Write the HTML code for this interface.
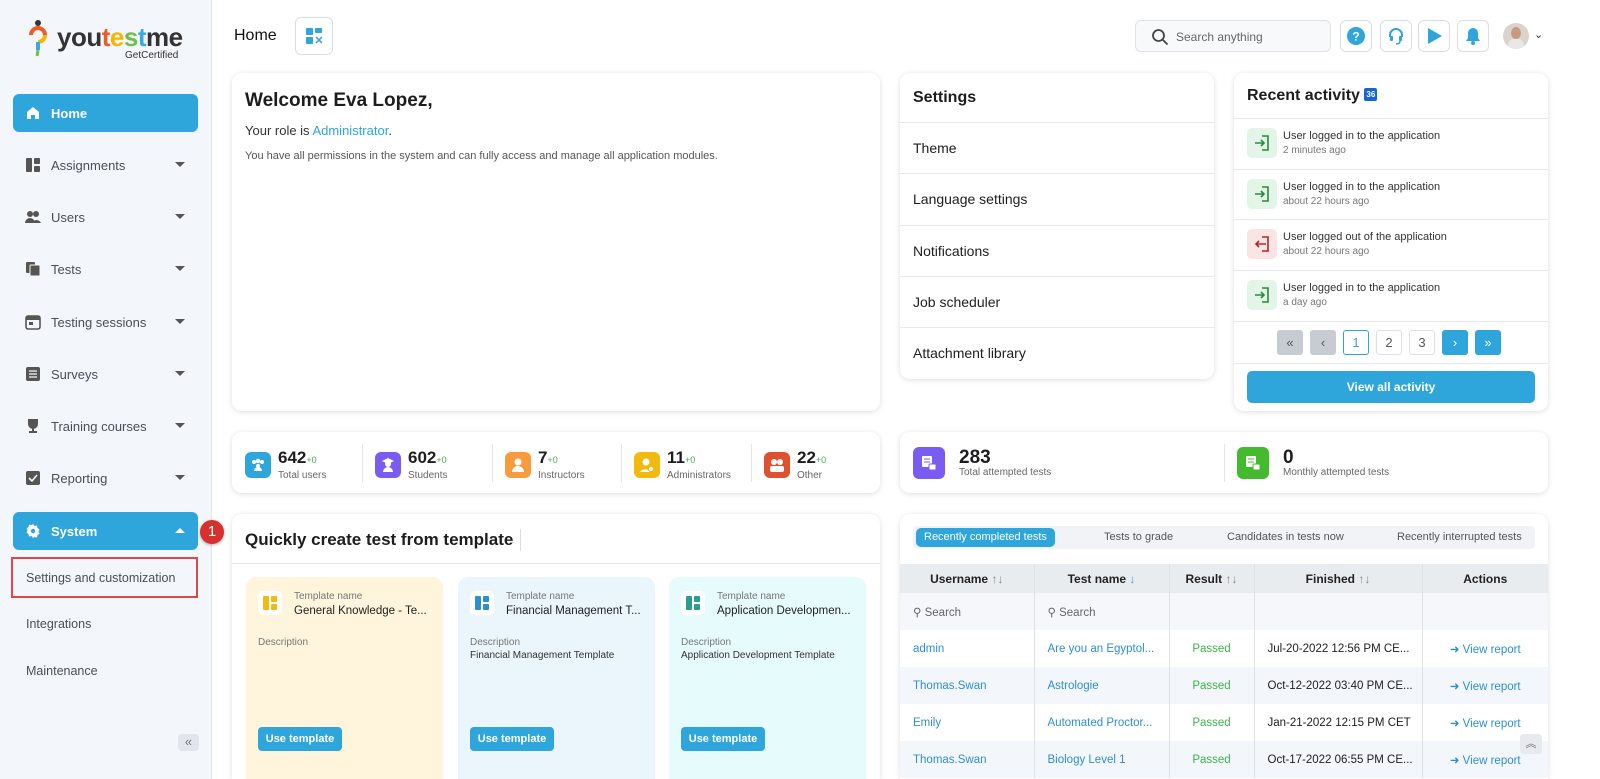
<!DOCTYPE html>
<html style="width:1600px;height:779px;overflow:hidden"><head><meta charset="utf-8">
<style>
*{box-sizing:border-box;margin:0;padding:0}
body{width:1600px;height:779px;overflow:hidden;font-family:"Liberation Sans",Arial,sans-serif;background:#fff;position:relative;color:#1d1d1f}
.a{position:absolute}
#side{left:0;top:0;width:212px;height:779px;background:#f3f6fb;border-right:1px solid #e3e7ee}
.nav{position:absolute;left:13px;width:185px;height:38px;border-radius:6px;font-size:13px;color:#4a4f57;display:flex;align-items:center;padding-left:12px}
.nav svg{margin-right:10px}
.nav .car{position:absolute;right:13px;top:16px;width:0;height:0;border-left:5px solid transparent;border-right:5px solid transparent;border-top:5px solid #555}
.act{background:#2ea6dc;color:#fff;font-weight:bold}
.sub{position:absolute;left:26px;font-size:12.5px;color:#4a4f57}
.card{position:absolute;background:#fff;border-radius:10px;box-shadow:0 1px 6px rgba(0,0,0,.13)}
.ib{position:absolute;top:20px;width:32px;height:32px;border:1px solid #d9dee5;border-radius:6px;background:#fff;display:flex;align-items:center;justify-content:center}
.srow{position:absolute;left:0;right:0;height:51px;border-top:1px solid #e6e9ee;font-size:14px;color:#1d1d1f;padding-left:13px;display:flex;align-items:center}
.act-it{position:absolute;left:0;right:0;height:50px;border-top:1px solid #e6e9ee}
.act-it .ic{position:absolute;left:13px;top:9px;width:30px;height:30px;border-radius:5px;display:flex;align-items:center;justify-content:center}
.act-it .t{position:absolute;left:49px;top:11px;font-size:11px;color:#333}
.act-it .s{position:absolute;left:49px;top:26px;font-size:10px;color:#777}
.pg{position:absolute;top:330px;width:26px;height:25px;border-radius:3px;font-size:13px;display:flex;align-items:center;justify-content:center}
.st{position:absolute;top:17px;display:flex;align-items:center}
.st .b{width:26px;height:26px;border-radius:6px;margin-right:7px;display:flex;align-items:center;justify-content:center}
.st .n{font-size:17px;font-weight:bold;line-height:17px}
.st .n small{font-size:9px;color:#3cb34a;font-weight:normal}
.st .l{font-size:10px;color:#666;margin-top:1px}
.sep{position:absolute;top:12px;width:1px;height:38px;background:#e3e6ea}
.tpl{position:absolute;top:63px;width:197px;height:240px;border-radius:10px}
.tpl .ico{position:absolute;left:12px;top:14px;width:24px;height:24px;background:#fff;border-radius:5px;display:flex;align-items:center;justify-content:center}
.tpl .tn{position:absolute;left:48px;top:14px;font-size:10px;color:#777}
.tpl .nm{position:absolute;left:48px;top:28px;font-size:11.5px;color:#222;white-space:nowrap;width:140px;overflow:hidden;text-overflow:ellipsis}
.tpl .dl{position:absolute;left:12px;top:60px;font-size:10px;color:#777}
.tpl .dd{position:absolute;left:12px;top:73px;font-size:10px;color:#333;white-space:nowrap}
.tpl .bt{position:absolute;left:12px;top:150px;width:84px;height:24px;border-radius:4px;background:#2ea6dc;color:#fff;font-size:11px;font-weight:bold;display:flex;align-items:center;justify-content:center;white-space:nowrap}
table{position:absolute;left:0;top:50px;width:648px;border-collapse:collapse;font-size:11.5px}
td,th{border-right:1px solid #dde1e6;padding:0 0 0 13px;text-align:left;white-space:nowrap}
th{background:#e9ecef;height:29px;font-size:12px;text-align:center;padding:0;color:#222}
td.c{text-align:center;padding:0}
.lk{color:#2e8fcf}
.pass{color:#3cb34a}
tr.r td{height:37px}
tr.alt td{background:#f3f7fb}
</style></head><body>
<div id="side" class="a">
 <svg class="a" style="left:28px;top:19px" width="22" height="40" viewBox="0 0 22 40"><circle cx="10" cy="4" r="3" fill="#333"/><path d="M3 16a7 7 0 0 1 14 0" stroke="#f05a28" stroke-width="4" fill="none"/><path d="M17 16a7 7 0 0 1-7 7" stroke="#f7b500" stroke-width="4" fill="none"/><path d="M10 23v8" stroke="#3aa9e0" stroke-width="4"/><path d="M10 31l-1 6" stroke="#6cc04a" stroke-width="3"/></svg>
 <div class="a" style="left:57px;top:22px;font-size:26px;font-weight:bold;letter-spacing:-0.5px;color:#333;line-height:30px">you<span style="color:#f05a28">t</span><span style="color:#f7b500">e</span><span style="color:#6cc04a">s</span><span style="color:#3aa9e0">t</span>me</div>
 <div class="a" style="left:125px;top:50px;font-size:10px;color:#333">GetCertified</div>
 <div class="nav act" style="top:94px"><svg width="16" height="16" viewBox="0 0 16 16"><path d="M2 7l6-5 6 5v7H10v-4H6v4H2z" fill="#fff"/></svg>Home</div>
 <div class="nav" style="top:146px"><svg width="16" height="16"><rect x="1" y="1" width="6" height="14" rx="1" fill="#555"/><rect x="9" y="1" width="6" height="6" rx="1" fill="#555"/><rect x="9" y="9" width="6" height="6" rx="1" fill="#555"/></svg>Assignments<span class="car"></span></div>
 <div class="nav" style="top:198px"><svg width="16" height="16"><circle cx="5" cy="5" r="3" fill="#555"/><circle cx="11" cy="5" r="3" fill="#555"/><path d="M0 14a5 5 0 0 1 10 0zM7 14a5 5 0 0 1 9 0z" fill="#555"/></svg>Users<span class="car"></span></div>
 <div class="nav" style="top:250px"><svg width="16" height="16"><rect x="1" y="1" width="9" height="11" rx="1" fill="#555"/><rect x="5" y="4" width="10" height="11" rx="1" fill="#555" stroke="#f3f6fb"/></svg>Tests<span class="car"></span></div>
 <div class="nav" style="top:303px"><svg width="16" height="16"><rect x="1" y="2" width="14" height="13" rx="2" fill="none" stroke="#555" stroke-width="1.6"/><rect x="1" y="2" width="14" height="4" fill="#555"/><rect x="4" y="8" width="4" height="3" fill="#555"/></svg>Testing sessions<span class="car"></span></div>
 <div class="nav" style="top:355px"><svg width="16" height="16"><rect x="1" y="1" width="14" height="14" rx="2" fill="#555"/><path d="M4 5h8M4 8h8M4 11h8" stroke="#f3f6fb" stroke-width="1.3"/></svg>Surveys<span class="car"></span></div>
 <div class="nav" style="top:407px"><svg width="16" height="16"><path d="M3 1h10v5a5 5 0 0 1-10 0z" fill="#555"/><path d="M7 10h2v3h3v2H4v-2h3z" fill="#555"/></svg>Training courses<span class="car"></span></div>
 <div class="nav" style="top:459px"><svg width="16" height="16"><rect x="1" y="1" width="14" height="14" rx="2" fill="#555"/><path d="M4 8l3 3 5-6" stroke="#f3f6fb" stroke-width="1.6" fill="none"/></svg>Reporting<span class="car"></span></div>
 <div class="nav act" style="top:512px"><svg width="16" height="16" viewBox="0 0 16 16"><path d="M8 1l1.5 2 2.5-.5.5 2.5 2 1.5-1 2 1 2-2 1.5-.5 2.5-2.5-.5L8 15l-1.5-2-2.5.5-.5-2.5-2-1.5 1-2-1-2 2-1.5.5-2.5 2.5.5z" fill="#fff"/><circle cx="8" cy="8" r="2.2" fill="#2ea6dc"/></svg>System<span class="car" style="border-top:none;border-bottom:5px solid #fff;top:16px"></span></div>
 <div class="a" style="left:11px;top:557px;width:187px;height:41px;border:2px solid #e04848"></div>
 <div class="sub" style="top:571px">Settings and customization</div>
 <div class="sub" style="top:617px">Integrations</div>
 <div class="sub" style="top:664px">Maintenance</div>
 <div class="a" style="left:178px;top:734px;width:21px;height:17px;border-radius:4px;background:#e2e6ec;color:#777;font-size:13px;text-align:center;line-height:16px">«</div>
</div>
<div class="a" style="left:200px;top:520px;width:24px;height:24px;border-radius:50%;background:#d7312e;color:#fff;font-size:15px;text-align:center;line-height:24px;box-shadow:0 1px 3px rgba(0,0,0,.3)">1</div>

<div class="a" style="left:234px;top:27px;font-size:16px;color:#111">Home</div>
<div class="ib" style="left:295px;top:17px;width:38px;height:38px"><svg width="18" height="18"><rect x="1" y="1" width="7" height="7" rx="1" fill="#2ea6dc"/><rect x="10" y="1" width="7" height="5" rx="1" fill="#2ea6dc"/><rect x="1" y="10" width="7" height="7" rx="1" fill="#2ea6dc"/><path d="M11 10l6 6M17 10l-6 6" stroke="#2ea6dc" stroke-width="1.5"/></svg></div>
<div class="a" style="left:1135px;top:20px;width:196px;height:32px;border:1px solid #dfe3e8;border-radius:6px;background:#f7f9fb"><svg class="a" style="left:15px;top:7px" width="18" height="18"><circle cx="7.5" cy="7.5" r="5.5" stroke="#444" stroke-width="1.8" fill="none"/><path d="M11.5 11.5l5 5" stroke="#444" stroke-width="1.8"/></svg><span class="a" style="left:40px;top:9px;font-size:12px;color:#666">Search anything</span></div>
<div class="ib" style="left:1340px"><svg width="18" height="18"><circle cx="9" cy="9" r="9" fill="#2ea6dc"/><text x="9" y="13.5" font-size="12" font-weight="bold" fill="#fff" text-anchor="middle" font-family="Liberation Sans">?</text></svg></div>
<div class="ib" style="left:1380px"><svg width="18" height="18"><path d="M3 10V8a6 6 0 0 1 12 0v2" stroke="#2ea6dc" stroke-width="2" fill="none"/><rect x="3" y="9" width="3" height="5" rx="1" fill="#2ea6dc"/><rect x="12" y="9" width="3" height="5" rx="1" fill="#2ea6dc"/><path d="M13 14q0 3-4 3" stroke="#2ea6dc" stroke-width="1.5" fill="none"/></svg></div>
<div class="ib" style="left:1418px"><svg width="18" height="18"><path d="M3 1l14 8-14 8z" fill="#2ea6dc"/></svg></div>
<div class="ib" style="left:1457px"><svg width="18" height="18"><path d="M9 1a5 5 0 0 1 5 5v5l2 3H2l2-3V6a5 5 0 0 1 5-5z" fill="#2ea6dc"/><circle cx="9" cy="16" r="2" fill="#2ea6dc"/></svg></div>
<div class="a" style="left:1503px;top:23px;width:26px;height:26px;border-radius:50%;background:#d9d3cc;overflow:hidden"><div class="a" style="left:8px;top:4px;width:10px;height:12px;border-radius:50%;background:#c89a80"></div><div class="a" style="left:5px;top:16px;width:16px;height:12px;border-radius:6px 6px 0 0;background:#e8e8e8"></div></div>
<div class="a" style="left:1534px;top:28px;font-size:11px;color:#333">&#8964;</div>

<div class="card" style="left:232px;top:73px;width:648px;height:338px">
 <div class="a" style="left:13px;top:17px;font-size:19px;font-weight:bold">Welcome Eva Lopez,</div>
 <div class="a" style="left:13px;top:50px;font-size:13px;color:#333">Your role is <span class="lk" style="color:#2ea6dc">Administrator</span>.</div>
 <div class="a" style="left:13px;top:77px;font-size:11px;color:#555">You have all permissions in the system and can fully access and manage all application modules.</div>
</div>

<div class="card" style="left:900px;top:73px;width:314px;height:306px">
 <div class="a" style="left:13px;top:16px;font-size:16px;font-weight:bold">Settings</div>
 <div class="srow" style="top:49px">Theme</div>
 <div class="srow" style="top:100px">Language settings</div>
 <div class="srow" style="top:152px">Notifications</div>
 <div class="srow" style="top:203px">Job scheduler</div>
 <div class="srow" style="top:254px;border-bottom:none">Attachment library</div>
</div>

<div class="card" style="left:1234px;top:73px;width:314px;height:338px">
 <div class="a" style="left:13px;top:14px;font-size:16px;font-weight:bold">Recent activity <span style="display:inline-block;background:#1565d8;color:#fff;font-size:8px;padding:2px 2px;border-radius:2px;vertical-align:3px">36</span></div>
 <div class="act-it" style="top:45px"><div class="ic" style="background:#e3f5e6"><svg width="18" height="18"><path d="M9 2h6v14H9" stroke="#2b8a3e" stroke-width="1.6" fill="none"/><path d="M2 9h9M8 6l3 3-3 3" stroke="#2b8a3e" stroke-width="1.6" fill="none"/></svg></div><div class="t">User logged in to the application</div><div class="s">2 minutes ago</div></div>
 <div class="act-it" style="top:96px"><div class="ic" style="background:#e3f5e6"><svg width="18" height="18"><path d="M9 2h6v14H9" stroke="#2b8a3e" stroke-width="1.6" fill="none"/><path d="M2 9h9M8 6l3 3-3 3" stroke="#2b8a3e" stroke-width="1.6" fill="none"/></svg></div><div class="t">User logged in to the application</div><div class="s">about 22 hours ago</div></div>
 <div class="act-it" style="top:146px"><div class="ic" style="background:#fbe4e4"><svg width="18" height="18"><path d="M9 2h6v14H9" stroke="#b3262b" stroke-width="1.6" fill="none"/><path d="M13 9H3M6 6L3 9l3 3" stroke="#b3262b" stroke-width="1.6" fill="none"/></svg></div><div class="t">User logged out of the application</div><div class="s">about 22 hours ago</div></div>
 <div class="act-it" style="top:197px"><div class="ic" style="background:#e3f5e6"><svg width="18" height="18"><path d="M9 2h6v14H9" stroke="#2b8a3e" stroke-width="1.6" fill="none"/><path d="M2 9h9M8 6l3 3-3 3" stroke="#2b8a3e" stroke-width="1.6" fill="none"/></svg></div><div class="t">User logged in to the application</div><div class="s">a day ago</div></div>
 <div class="act-it" style="top:248px;height:0"></div>
 <div class="pg" style="left:43px;top:257px;background:#c7ccd3;color:#555">«</div>
 <div class="pg" style="left:76px;top:257px;background:#c7ccd3;color:#555">‹</div>
 <div class="pg" style="left:109px;top:257px;border:1px solid #2ea6dc;color:#2ea6dc">1</div>
 <div class="pg" style="left:142px;top:257px;border:1px solid #dde1e6;color:#555">2</div>
 <div class="pg" style="left:175px;top:257px;border:1px solid #dde1e6;color:#555">3</div>
 <div class="pg" style="left:208px;top:257px;background:#2ea6dc;color:#fff">›</div>
 <div class="pg" style="left:241px;top:257px;background:#2ea6dc;color:#fff">»</div>
 <div class="a" style="left:0;right:0;top:290px;border-top:1px solid #e6e9ee"></div>
 <div class="a" style="left:13px;top:298px;width:288px;height:32px;border-radius:5px;background:#2ea6dc;color:#fff;font-size:12px;font-weight:bold;text-align:center;line-height:32px">View all activity</div>
</div>

<div class="card" style="left:232px;top:432px;width:648px;height:61px">
 <div class="st" style="left:13px"><div class="b" style="background:#2ea6dc"><svg width="16" height="16"><circle cx="4" cy="5" r="2" fill="#fff"/><circle cx="12" cy="5" r="2" fill="#fff"/><circle cx="8" cy="4" r="2.3" fill="#fff"/><path d="M4 14a4 4 0 0 1 8 0z" fill="#fff"/><circle cx="8" cy="9" r="2" fill="#fff"/></svg></div><div><div class="n">642<small>+0</small></div><div class="l">Total users</div></div></div>
 <div class="sep" style="left:130px"></div>
 <div class="st" style="left:143px"><div class="b" style="background:#7b5cf0"><svg width="16" height="16"><path d="M2 4l6-3 6 3-6 3z" fill="#fff"/><circle cx="8" cy="7" r="3" fill="#fff"/><path d="M3 15a5 5 0 0 1 10 0z" fill="#fff"/></svg></div><div><div class="n">602<small>+0</small></div><div class="l">Students</div></div></div>
 <div class="sep" style="left:260px"></div>
 <div class="st" style="left:273px"><div class="b" style="background:#f89b3c"><svg width="16" height="16"><circle cx="8" cy="5" r="3.5" fill="#fff"/><path d="M2 15a6 6 0 0 1 12 0z" fill="#fff"/></svg></div><div><div class="n">7<small>+0</small></div><div class="l">Instructors</div></div></div>
 <div class="sep" style="left:389px"></div>
 <div class="st" style="left:402px"><div class="b" style="background:#f2b90f"><svg width="16" height="16"><circle cx="7" cy="5" r="3.5" fill="#fff"/><path d="M1 15a6 6 0 0 1 10 0z" fill="#fff"/><circle cx="12" cy="12" r="2.5" fill="#fff" stroke="#f2b90f"/></svg></div><div><div class="n">11<small>+0</small></div><div class="l">Administrators</div></div></div>
 <div class="sep" style="left:519px"></div>
 <div class="st" style="left:532px"><div class="b" style="background:#e0502e"><svg width="16" height="16"><circle cx="5" cy="5" r="3" fill="#fff"/><circle cx="11" cy="5" r="3" fill="#fff"/><rect x="1" y="9" width="14" height="6" rx="2" fill="#fff"/></svg></div><div><div class="n">22<small>+0</small></div><div class="l">Other</div></div></div>
</div>

<div class="card" style="left:900px;top:432px;width:648px;height:61px">
 <div class="st" style="left:13px;top:15px"><div class="b" style="background:#7b5cf0;width:32px;height:32px;margin-right:14px"><svg width="18" height="18"><rect x="2" y="2" width="10" height="11" rx="1" fill="#fff"/><path d="M4 5h6M4 8h6" stroke="#7b5cf0"/><rect x="9" y="10" width="7" height="6" rx="1" fill="#fff" stroke="#7b5cf0"/></svg></div><div><div class="n" style="font-size:19px">283</div><div class="l">Total attempted tests</div></div></div>
 <div class="sep" style="left:324px"></div>
 <div class="st" style="left:337px;top:15px"><div class="b" style="background:#44bb2e;width:32px;height:32px;margin-right:14px"><svg width="18" height="18"><rect x="2" y="2" width="10" height="11" rx="1" fill="#fff"/><path d="M4 5h6M4 8h6" stroke="#44bb2e"/><rect x="9" y="10" width="7" height="6" rx="1" fill="#fff" stroke="#44bb2e"/></svg></div><div><div class="n" style="font-size:19px">0</div><div class="l">Monthly attempted tests</div></div></div>
</div>

<div class="card" style="left:232px;top:514px;width:648px;height:265px;overflow:hidden;border-radius:10px 10px 0 0">
 <div class="a" style="left:13px;top:15px;font-size:17px;font-weight:bold;padding-right:7px;border-right:1px solid #ddd;line-height:22px">Quickly create test from template</div>
 <div class="a" style="left:0;right:0;top:49px;border-top:1px solid #e3e7ee"></div>
 <div class="tpl" style="left:14px;background:#fff4dc"><div class="ico"><svg width="14" height="14"><rect x="0" y="0" width="6" height="14" rx="1" fill="#f2b90f"/><rect x="8" y="0" width="6" height="6" rx="1" fill="#f2b90f"/><rect x="8" y="8" width="6" height="6" rx="1" fill="#f2b90f"/></svg></div><div class="tn">Template name</div><div class="nm">General Knowledge - Te...</div><div class="dl">Description</div><div class="bt">Use template</div></div>
 <div class="tpl" style="left:226px;background:#eaf6fc"><div class="ico"><svg width="14" height="14"><rect x="0" y="0" width="6" height="14" rx="1" fill="#2e8fcf"/><rect x="8" y="0" width="6" height="6" rx="1" fill="#2e8fcf"/><rect x="8" y="8" width="6" height="6" rx="1" fill="#2e8fcf"/></svg></div><div class="tn">Template name</div><div class="nm">Financial Management T...</div><div class="dl">Description</div><div class="dd">Financial Management Template</div><div class="bt">Use template</div></div>
 <div class="tpl" style="left:437px;background:#e6fbfb"><div class="ico"><svg width="14" height="14"><rect x="0" y="0" width="6" height="14" rx="1" fill="#2a9d8f"/><rect x="8" y="0" width="6" height="6" rx="1" fill="#2a9d8f"/><rect x="8" y="8" width="6" height="6" rx="1" fill="#2a9d8f"/></svg></div><div class="tn">Template name</div><div class="nm">Application Developmen...</div><div class="dl">Description</div><div class="dd">Application Development Template</div><div class="bt">Use template</div></div>
</div>

<div class="card" style="left:900px;top:514px;width:648px;height:265px;overflow:hidden;border-radius:10px 10px 0 0">
 <div class="a" style="left:13px;top:12px;width:622px;height:23px;background:#f1f3f6;border-radius:5px;font-size:11px;color:#555">
  <span class="a" style="left:3px;top:2px;height:19px;padding:0 8px;line-height:19px;background:#2ea6dc;color:#fff;border-radius:5px">Recently completed tests</span>
  <span class="a" style="left:191px;top:5px">Tests to grade</span>
  <span class="a" style="left:314px;top:5px">Candidates in tests now</span>
  <span class="a" style="left:484px;top:5px">Recently interrupted tests</span>
 </div>
 <table>
  <tr><th style="width:134px">Username <span style="color:#888">↑↓</span></th><th style="width:135px">Test name <span style="color:#2ea6dc">↓</span></th><th style="width:85px">Result <span style="color:#888">↑↓</span></th><th style="width:168px">Finished <span style="color:#888">↑↓</span></th><th style="border-right:none">Actions</th></tr>
  <tr class="r" style="background:#f5f7fa"><td style="color:#666">⚲ Search</td><td style="color:#666">⚲ Search</td><td></td><td></td><td style="border-right:none"></td></tr>
  <tr class="r"><td class="lk">admin</td><td class="lk">Are you an Egyptol...</td><td class="c pass">Passed</td><td>Jul-20-2022 12:56 PM CE...</td><td class="c lk" style="border-right:none"><span style="color:#2e8fcf">➜</span> View report</td></tr>
  <tr class="r alt"><td class="lk">Thomas.Swan</td><td class="lk">Astrologie</td><td class="c pass">Passed</td><td>Oct-12-2022 03:40 PM CE...</td><td class="c lk" style="border-right:none">➜ View report</td></tr>
  <tr class="r"><td class="lk">Emily</td><td class="lk">Automated Proctor...</td><td class="c pass">Passed</td><td>Jan-21-2022 12:15 PM CET</td><td class="c lk" style="border-right:none">➜ View report</td></tr>
  <tr class="r alt"><td class="lk">Thomas.Swan</td><td class="lk">Biology Level 1</td><td class="c pass">Passed</td><td>Oct-17-2022 06:55 PM CE...</td><td class="c lk" style="border-right:none">➜ View report</td></tr>
 </table>
 <div class="a" style="left:620px;top:220px;width:22px;height:20px;background:#e6e9ee;border-radius:4px;font-size:11px;text-align:center;line-height:20px;color:#666">︽</div>
</div>
</body></html>
